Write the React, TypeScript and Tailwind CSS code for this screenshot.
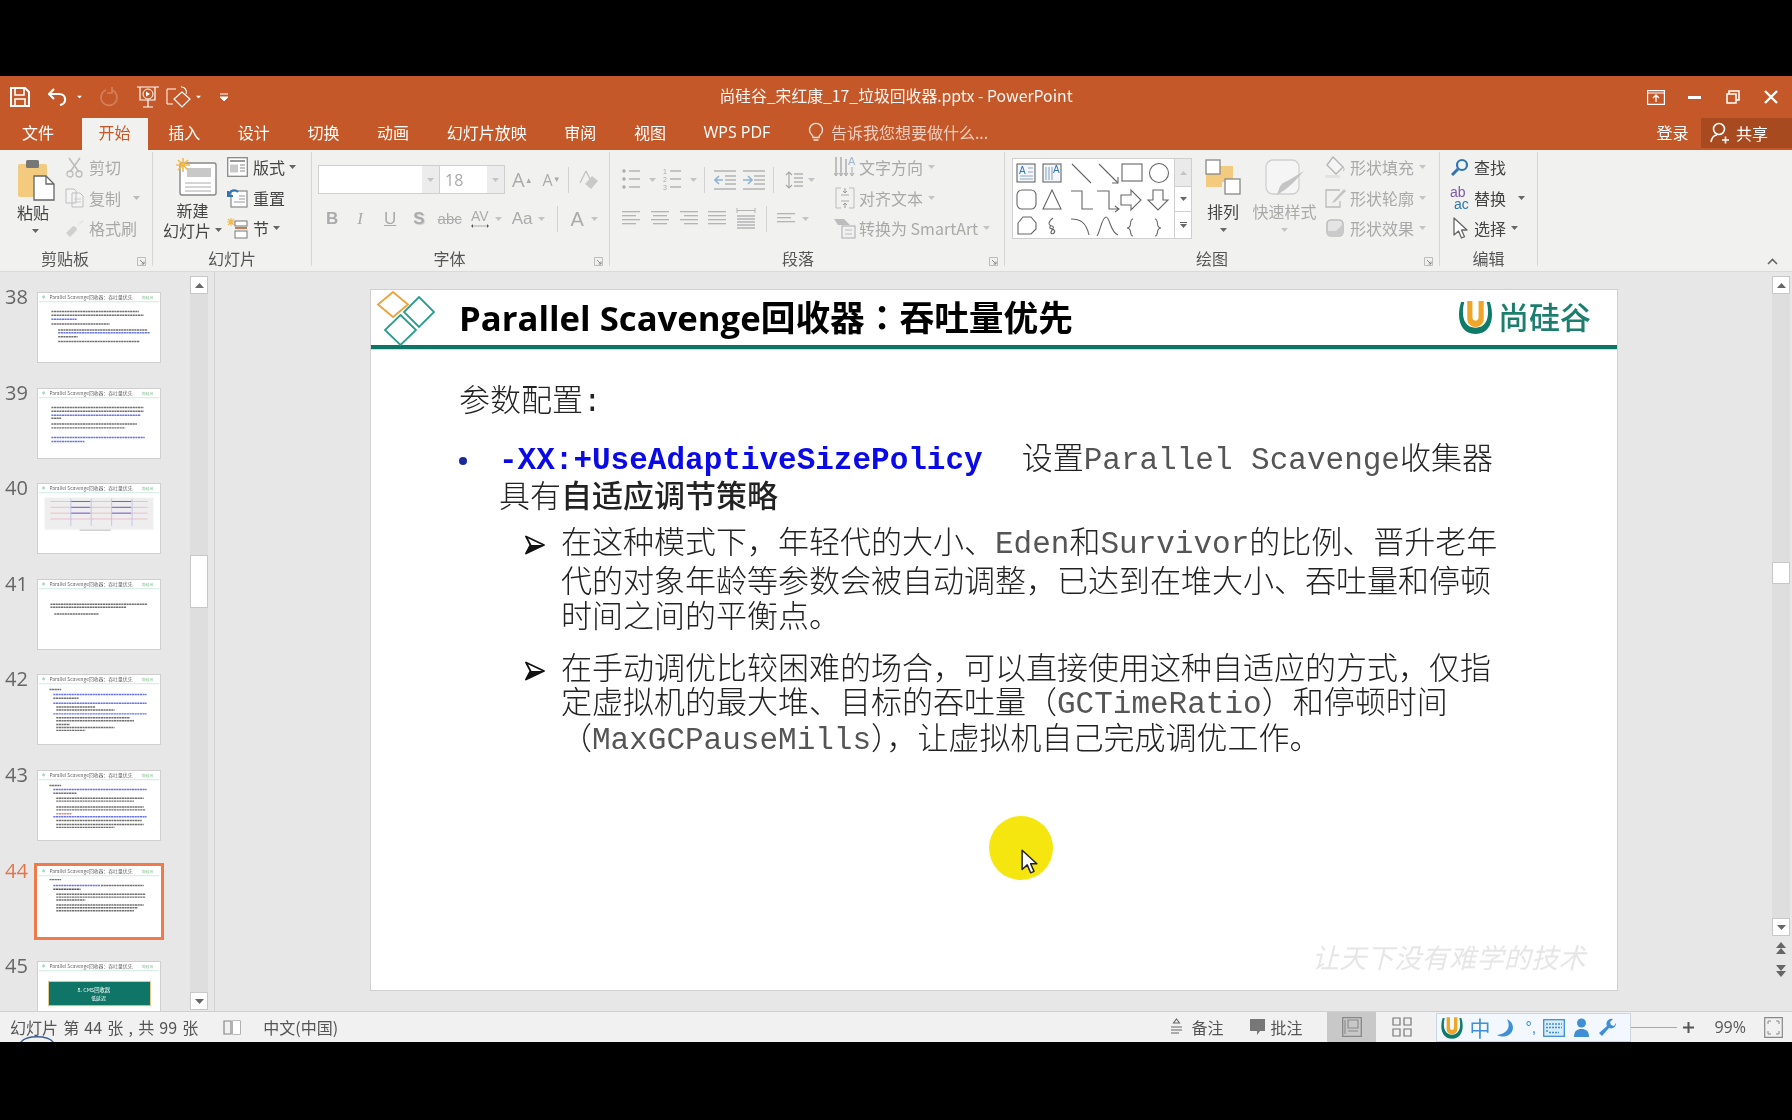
import React from "react";

const CJK = '"Noto Sans CJK SC", sans-serif';

type SP = { w: number; h: number; children: React.ReactNode; className?: string };
const S = ({ w, h, children, className }: SP) => (
  <svg width={w} height={h} viewBox={`0 0 ${w} ${h}`} fill="none" className={`shrink-0 ${className ?? ""}`}>
    {children}
  </svg>
);

const Caret = ({ c = "#777", className = "" }: { c?: string; className?: string }) => (
  <S w={7} h={4} className={className}><path d="M0 0h7L3.5 4z" fill={c} /></S>
);

const Launcher = () => (
  <div className="absolute right-[6px] bottom-0">
    <S w={9} h={9}>
      <path d="M.5 .5h8v8h-8z" stroke="#BDBDBD" />
      <path d="M3 3l4 4M7 4.5V7H4.5" stroke="#888" />
    </S>
  </div>
);

function Small({ icon, iw, text, dim, gap = 5 }: { icon: React.ReactNode; iw: number; text: string; dim?: boolean; gap?: number }) {
  return (
    <div className="flex h-[30.5px] items-center">
      <div className="flex justify-center shrink-0" style={{ width: iw, marginRight: gap }}>{icon}</div>
      <span className={`text-[16px] leading-none whitespace-nowrap ${dim ? "text-[#A9A9A9]" : "text-[#444]"}`}>{text}</span>
    </div>
  );
}

function Group({ w, label, launcher, lx = 0, children }: { w: number; label: string; launcher?: boolean; lx?: number; children: React.ReactNode }) {
  return (
    <div className="relative mt-[2px] h-[114px] border-r border-[#D6D6D6] shrink-0" style={{ width: w }}>
      <div className="h-[91.5px] flex">{children}</div>
      <div className="mt-[6px] text-center text-[16px] leading-[16px] text-[#555]" style={{ paddingRight: lx }}>{label}</div>
      {launcher && <Launcher />}
    </div>
  );
}

const Sep = ({ h = 26, x = 0 }: { h?: number; x?: number }) => (
  <div className="w-px bg-[#D2D2D2] shrink-0" style={{ height: h, marginLeft: x }} />
);

/* ---------- ribbon glyphs ---------- */
const PasteIcon = () => (
  <S w={38} h={42}>
    <rect x="1" y="5" width="29" height="33" rx="2" fill="#F2CB7F" />
    <rect x="9" y="1" width="13" height="8" rx="1.5" fill="#777" />
    <path d="M17 17h12l8 8v16H17z" fill="#fff" stroke="#666" strokeWidth="1.3" />
    <path d="M29 17v8h8" stroke="#666" strokeWidth="1.3" />
  </S>
);
const NewSlide = () => (
  <S w={42} h={38}>
    <rect x="5" y="5" width="36" height="32" rx="2" fill="#fff" stroke="#888" strokeWidth="1.4" />
    <rect x="12" y="10" width="24" height="9" fill="#C8C8C8" />
    <path d="M10 25h26M10 29h26M10 33h26" stroke="#AAA" />
    <path d="M8 0v14M1 7h14M3 2l10 10M13 2L3 12" stroke="#F3B94C" strokeWidth="1.6" />
  </S>
);
const Layout = () => (
  <S w={21} h={20}>
    <rect x=".7" y=".7" width="19.6" height="18.6" fill="#fff" stroke="#888" strokeWidth="1.3" />
    <path d="M3 4h15" stroke="#999" strokeWidth="2" />
    <path d="M3 7.5h8v8H3z" fill="#C9C9C9" />
    <path d="M13 8h5M13 11h5M13 14h5" stroke="#888" />
  </S>
);
const Reset = () => (
  <S w={21} h={20}>
    <rect x="4" y="3" width="16" height="16" fill="#fff" stroke="#888" strokeWidth="1.2" />
    <path d="M12 8h6M12 11h6M7 14h11" stroke="#999" />
    <path d="M2 7c1-5 6-6 9-3M1 3v5h5" stroke="#2E75B6" strokeWidth="2" />
  </S>
);
const Section = () => (
  <S w={22} h={22}>
    <path d="M4 1v8M0 5h8M1 2l6 6M7 2L1 8" stroke="#F3B94C" strokeWidth="1.2" />
    <rect x="8" y="4" width="12" height="5" fill="#fff" stroke="#777" />
    <path d="M8 11h12" stroke="#C55A28" strokeWidth="1.6" />
    <rect x="8" y="14" width="12" height="7" fill="#fff" stroke="#777" />
  </S>
);
const Lines = ({ w = 18, n = 4, kind = "l" }: { w?: number; n?: number; kind?: "l" | "c" | "r" | "j" }) => {
  const rows = Array.from({ length: n }, (_, i) => i);
  return (
    <S w={w} h={n * 4 + 1}>
      {rows.map((i) => {
        const short = i % 2 === 1 && kind !== "j" ? 4 : 0;
        const x = kind === "c" ? short / 2 : kind === "r" ? short : 0;
        return <rect key={i} x={x} y={i * 4} width={w - short} height="1.3" fill="#B4B4B4" />;
      })}
    </S>
  );
};
const Bullets = ({ nums }: { nums?: boolean }) => (
  <S w={18} h={21}>
    {[2, 10, 18].map((y, i) =>
      nums ? (
        <text key={y} x="0" y={y + 2.5} fontSize="7" fill="#AAA" fontFamily="Liberation Sans">{i + 1}</text>
      ) : (
        <circle key={y} cx="2" cy={y} r="1.7" fill="#ABABAB" />
      )
    )}
    <path d="M7 2h11M7 10h11M7 18h11" stroke="#B4B4B4" strokeWidth="1.3" />
  </S>
);
const Indent = ({ right }: { right?: boolean }) => (
  <S w={22} h={20}>
    <path d="M0 1h22M11 6h11M11 10h11M11 14h11M0 19h22" stroke="#B4B4B4" strokeWidth="1.3" />
    <path d={right ? "M0 10h8M5 6l4 4-4 4" : "M9 10H1M5 6l-4 4 4 4"} stroke="#8FB3D6" strokeWidth="1.6" />
  </S>
);
const LineSpace = () => (
  <S w={18} h={20}>
    <path d="M4 2v16M1 5l3-3 3 3M1 15l3 3 3-3" stroke="#A9A9A9" strokeWidth="1.2" />
    <path d="M9 4h9M9 8h9M9 12h9M9 16h9" stroke="#B4B4B4" strokeWidth="1.3" />
  </S>
);
const TextDir = () => (
  <S w={22} h={24}>
    <path d="M2 2v18M7 2v18M12 4v16" stroke="#A9A9A9" strokeWidth="1.4" />
    <path d="M0 18l2 3 2-3M5 18l2 3 2-3M10 18l2 3 2-3" stroke="#A9A9A9" />
    <text x="14" y="10" fontSize="11" fill="#9FB6CC" fontFamily="Liberation Sans">A</text>
    <path d="M18 12v8M16 18l2 3 2-3" stroke="#A9A9A9" />
  </S>
);
const AlignText = () => (
  <S w={20} h={22}>
    <path d="M6 1H1v20h5M14 1h5v20h-5" stroke="#BBB" />
    <path d="M6 8h8M6 14h8" stroke="#AAA" />
    <path d="M10 1v5M8 4l2 2 2-2M10 21v-5M8 18l2-2 2 2" stroke="#999" />
  </S>
);
const SmartArt = () => (
  <S w={22} h={22}>
    <path d="M0 2h10l6 6H4z" fill="#BDBDBD" />
    <rect x="8" y="9" width="13" height="12" fill="#F1F1F1" stroke="#AAA" />
    <path d="M11 13h7M11 17h7" stroke="#BBB" />
  </S>
);
const Shapes = () => (
  <S w={161} h={80}>
    <g stroke="#666" strokeWidth="1.1">
      <rect x="4" y="5" width="18" height="18" fill="#F3F6FA" />
      <path d="M15 9h5M15 13h5M7 17h13M7 20h13" stroke="#8FA7C2" />
      <rect x="30" y="5" width="18" height="18" fill="#F3F6FA" />
      <path d="M33 8v13M36 8v13M39 8v13" stroke="#8FA7C2" />
      <path d="M59 5l19 19M86 5l19 19" />
      <path d="M105 18v6h-6" />
      <rect x="109" y="5" width="20" height="17" />
      <circle cx="146" cy="14" r="9.5" />
      <rect x="4" y="31" width="19" height="19" rx="5" />
      <path d="M39 31l9 19H30z" />
      <path d="M58 32h11v18h11" />
      <path d="M84 32h12v18h10M102 47l4 3-4 3" />
      <path d="M108 36h10v-5l10 10-10 10v-5h-10z" />
      <path d="M140 31h10v10h5l-10 10-10-10h5z" />
      <path d="M5 64l5-6h8l5 6v6l-5 5H5z" />
      <path d="M40 59c-4 3-6 7-1 8 4 1-2 5-1 7 2 2 5-1 3-3-3-2-6-1-3-5" />
      <path d="M58 60c9 0 15 3 18 16" />
      <path d="M84 77c3-4 5-19 9-19s4 15 12 18" />
      <path d="M120 60c-3 0-2 5-3 7-1 2-3 2-3 2s2 0 3 2c1 2 0 6 3 6" />
      <path d="M142 60c3 0 2 5 3 7 1 2 3 2 3 2s-2 0-3 2c-1 2 0 6-3 6" />
    </g>
    <text x="6" y="15" fontSize="10" fill="#2E75B6" fontFamily="Liberation Sans">A</text>
    <text x="40" y="14" fontSize="10" fill="#2E75B6" fontFamily="Liberation Sans">A</text>
  </S>
);
const Arrange = () => (
  <S w={36} h={36}>
    <rect x="12" y="7" width="16" height="16" fill="#F2CB7F" />
    <rect x="1" y="12" width="16" height="16" fill="#F2CB7F" />
    <rect x="1" y="1" width="14" height="14" fill="#fff" stroke="#888" strokeWidth="1.3" />
    <rect x="20" y="20" width="15" height="15" fill="#fff" stroke="#888" strokeWidth="1.3" />
  </S>
);
const Quick = () => (
  <S w={40} h={38}>
    <rect x="1" y="1" width="33" height="34" rx="7" fill="#F5F5F5" stroke="#CFCFCF" strokeWidth="1.3" />
    <path d="M39 12L28 24l-7 6-9 6c2-6 3-10 6-12l6-3z" fill="#C4C4C4" />
  </S>
);
const Fill = () => (
  <S w={21} h={22}>
    <path d="M8 1l10 10-7 7L2 9z" fill="#F5F5F5" stroke="#B5B5B5" strokeWidth="1.4" />
    <path d="M17 10c2 2 3 4 1 5" stroke="#B5B5B5" />
    <rect x="0" y="19" width="15" height="3" fill="#E3E3E3" />
  </S>
);
const Outline = () => (
  <S w={21} h={22}>
    <path d="M15 3H1v17h14v-6" stroke="#BBB" strokeWidth="1.3" />
    <path d="M19 2L9 13l-2 3 3-1L21 4z" fill="#C4C4C4" />
  </S>
);
const Effect = () => (
  <S w={20} h={20}>
    <rect x="2" y="2" width="16" height="16" rx="4" fill="#E4E4E4" stroke="#BDBDBD" strokeWidth="1.6" />
    <path d="M2 13h9l7-7v8a4 4 0 0 1-4 4H6a4 4 0 0 1-4-4z" fill="#CACACA" />
  </S>
);
const Find = () => (
  <S w={18} h={18}>
    <circle cx="11" cy="7" r="5" stroke="#2E75B6" strokeWidth="2.2" />
    <path d="M7 11l-6 6" stroke="#2E75B6" strokeWidth="3" />
  </S>
);
const Replace = () => (
  <div className="relative w-[22px] h-[24px] font-['Liberation_Sans'] text-[14px] leading-[12px]">
    <div className="text-[#7C5AA6] pl-[1px]">ab</div>
    <div className="text-[#2E75B6] pl-[5px]">ac</div>
  </div>
);
const Cursor = ({ stroke = "#666", fill = "#fff", w = 15, h = 22 }: { stroke?: string; fill?: string; w?: number; h?: number }) => (
  <svg width={w} height={h} viewBox="0 0 15 22" className="shrink-0">
    <path d="M1 1v17l4.5-4 3 7 3-1.3-3-6.7H14z" fill={fill} stroke={stroke} strokeWidth="1.3" strokeLinejoin="round" />
  </svg>
);

/* ---------- thumbnails ---------- */
type Ln = [number, number, number, string?];
const BL = "#2D3FD8";
const RD = "#E0543E";
const THUMBS: { n: number; lines: Ln[]; diagram?: boolean; cover?: boolean }[] = [
  { n: 38, lines: [[19, 13, 90], [23, 13, 95], [27, 13, 26, BL], [32, 13, 60], [38, 20, 92], [41, 20, 94, BL], [45, 20, 20], [50, 20, 84]] },
  { n: 39, lines: [[19, 13, 95], [23, 13, 95], [27, 13, 92, BL], [30, 13, 10], [36, 13, 88], [40, 13, 76], [50, 13, 96, BL], [54, 13, 34, BL]] },
  { n: 40, diagram: true, lines: [] },
  { n: 41, lines: [[25, 12, 100], [28, 12, 78], [35, 16, 46]] },
  { n: 42, lines: [[15, 11, 12], [20, 15, 96, BL], [24, 15, 26], [29, 15, 96, BL], [33, 18, 40], [36, 18, 60], [40, 15, 96, BL], [44, 18, 76], [47, 18, 80], [51, 18, 14], [54, 18, 60], [57, 18, 30]] },
  { n: 43, lines: [[15, 11, 12], [19, 15, 96, BL], [23, 15, 24], [28, 18, 90], [31, 18, 80], [37, 18, 90], [40, 18, 92], [44, 18, 16, RD], [47, 15, 96, BL], [51, 18, 88], [55, 18, 90], [58, 18, 60]] },
  { n: 44, lines: [[13, 11, 12], [19, 15, 48, BL], [19, 64, 44], [23, 15, 28, "#111"], [28, 18, 92], [31, 18, 92], [34, 18, 30], [39, 18, 90], [42, 18, 84], [45, 18, 80]] },
  { n: 45, cover: true, lines: [] },
];

function Thumb({ t, selected }: { t: (typeof THUMBS)[number]; selected: boolean }) {
  return (
    <div className="flex h-[95.6px] shrink-0">
      <div className={`w-[37px] pl-[5px] -mt-[2px] text-[20px] leading-[13px] font-['Open_Sans'] ${selected ? "text-[#E0744A]" : "text-[#666]"}`}>{t.n}</div>
      <div className={`w-[124px] h-[71px] bg-white border ${selected ? "border-white outline-3 outline-[#EE7B4C]" : "border-[#CFCFCF]"}`}>
        <svg width="122" height="69" viewBox="0 0 124 71" className="blur-[0.5px]">
          <path d="M3 4l2-2 2 2-2 2z" fill="#A8D8CC" />
          <text x="11" y="6" fontSize="5" fill="#666" fontFamily={CJK}>Parallel Scavenge回收器：吞吐量优先</text>
          <text x="106" y="6" fontSize="4" fill="#7DBB8E" fontFamily={CJK}>尚硅谷</text>
          <rect x="0" y="8.500" width="124" height="1" fill="#CFE8E2" />
          {t.lines.map(([y, x, w, c], i) => (
            <path key={i} d={`M${x} ${y}h${w}`} stroke={c ?? "#3A3A3A"} strokeWidth="1.5" strokeDasharray="2.2 .5" opacity=".72" />
          ))}
          {t.diagram && (
            <g>
              <rect x="6" y="14" width="112" height="33" fill="#EEEEEE" />
              {[18, 24, 30, 36].map((y) => <path key={y} d={`M12 ${y}h100`} stroke="#ECA9B8" strokeWidth=".7" />)}
              {[18, 24, 30].map((y) => <path key={y} d={`M33 ${y}h20M75 ${y}h20`} stroke="#6A5FD0" strokeWidth="1" />)}
              <path d="M33 15v28M54 15v28M75 15v28M96 15v28" stroke="#C0C3EC" strokeWidth="1" />
              <rect x="42" y="47" width="32" height="1" fill="#BBB" />
            </g>
          )}
          {t.cover && (
            <g>
              <rect x="10" y="20" width="105" height="25" fill="#0F7566" stroke="#E8C88A" />
              <text x="40" y="31" fontSize="5.5" fill="#fff" fontFamily={CJK}>8. CMS回收器</text>
              <text x="54" y="39" fontSize="5" fill="#fff" fontFamily={CJK}>低延迟</text>
            </g>
          )}
        </svg>
      </div>
    </div>
  );
}

const ScrollBtn = ({ up }: { up?: boolean }) => (
  <div className="h-[18px] w-[18px] bg-white border border-[#C8C8C8] flex items-center justify-center shrink-0">
    <svg width="9" height="5" viewBox="0 0 9 5"><path d={up ? "M4.5 0L9 5H0z" : "M0 0h9L4.5 5z"} fill="#666" /></svg>
  </div>
);

const Line = ({ mt, children, className = "" }: { mt: number; children: React.ReactNode; className?: string }) => (
  <div className={`h-[36px] leading-[36px] whitespace-nowrap ${className}`} style={{ marginTop: mt }}>{children}</div>
);

const La = ({ children }: { children: React.ReactNode }) => <span className="text-[#555]">{children}</span>;

const SubArrow = () => (
  <div className="w-[102px] pl-[66px] shrink-0 flex items-center h-[36px]">
    <svg width="20" height="20" viewBox="0 0 20 20">
      <path d="M1 1.500L19 10 1 18.500 5.500 10z" fill="#fff" stroke="#111" strokeWidth="1.800" strokeLinejoin="round" />
      <path d="M5.500 10L19 10 1 18.500z" fill="#111" />
    </svg>
  </div>
);

const UMark = ({ size = 36 }: { size?: number }) => (
  <svg width={size} height={size} viewBox="0 0 36 36" className="shrink-0">
    <path d="M4 3C-1 18 3 34 18 34S37 18 32 3l-3 0c3 12 1 25-11 25S4 15 7 3z" fill="#0E7A68" />
    <path d="M10 2h5v16c0 4 6 4 6 0V2h5v17c0 11-16 11-16 0z" fill="#EFA526" />
  </svg>
);

const Tab = ({ children, className = "" }: { children: React.ReactNode; className?: string }) => (
  <span className={`pt-[6px] ${className}`}>{children}</span>
);

export default function App() {
  return (
    <div className="w-[1792px] h-[1120px] bg-black flex flex-col overflow-hidden text-[#444] blur-[0.3px] font-['Noto_Sans_CJK_SC',sans-serif]">
      <div className="h-[76px] shrink-0" />

      {/* title bar */}
      <div className="h-[42px] shrink-0 bg-[#C55829] grid grid-cols-[1fr_auto_1fr] items-center text-white">
        <div className="flex items-center pl-[10px]">
          <S w={20} h={20}>
            <path d="M1 1h14l4 4v14H1z" stroke="#fff" strokeWidth="2" />
            <path d="M5 2v6h9V2M5 18v-6h10v6" stroke="#fff" strokeWidth="1.6" />
          </S>
          <S w={19} h={18} className="ml-[18px]">
            <path d="M6 1L1 6l5 5M1 6h10c8 0 8 10 1 11" stroke="#fff" strokeWidth="2.2" />
          </S>
          <Caret c="#fff" className="ml-[9px] scale-75" />
          <S w={20} h={20} className="ml-[16px] opacity-30">
            <path d="M7 3a8 8 0 1 0 6 0M13 0v6h-5" stroke="#F4D9CB" strokeWidth="1.6" />
          </S>
          <S w={22} h={24} className="ml-[18px]">
            <path d="M0 2h22M3 2v13h15V2M11 15v7M6 22h10" stroke="#fff" strokeWidth="1.2" />
            <circle cx="11" cy="9" r="5" stroke="#fff" />
            <path d="M9 6.5v5l4-2.5z" fill="#fff" />
          </S>
          <S w={26} h={22} className="ml-[7px]">
            <path d="M10 3H1v15h6" stroke="#fff" />
            <path d="M15 1a5 5 0 0 1 5 7M16 6l-8 7 8 8 8-8z" stroke="#fff" strokeWidth="1.2" />
          </S>
          <Caret c="#fff" className="ml-[3px] scale-75" />
          <S w={8} h={9} className="ml-[18px]">
            <path d="M0 1h8M0 4h8L4 8z" stroke="#fff" fill="#fff" strokeWidth="1" />
          </S>
        </div>
        <div className="text-[15.8px] leading-none whitespace-nowrap text-white/95 -mt-[2px]">尚硅谷_宋红康_17_垃圾回收器.pptx - PowerPoint</div>
        <div className="flex items-center justify-end pr-[14px]">
          <S w={18} h={15}>
            <path d="M.6.6h16.8v13.8H.6zM.6 3h16.8" stroke="#fff" strokeWidth="1.2" />
            <path d="M9 12V6M6 8l3-3 3 3" stroke="#fff" strokeWidth="1.3" />
          </S>
          <div className="ml-[23px] w-[13px] h-[3px] bg-white" />
          <S w={14} h={14} className="ml-[25px]">
            <path d="M3 4V1h10v9h-3M1 4h9v9H1z" stroke="#fff" strokeWidth="1.5" />
          </S>
          <S w={14} h={14} className="ml-[24px]">
            <path d="M1 1l12 12M13 1L1 13" stroke="#fff" strokeWidth="2.4" />
          </S>
        </div>
      </div>

      {/* tabs */}
      <div className="h-[32px] shrink-0 bg-[#C55829] flex items-start text-white text-[16px] leading-[16px] pl-[22px] gap-[37.6px] whitespace-nowrap">
        <Tab className="mr-[7px]">文件</Tab>
        <Tab className="bg-[#F1F2F0] text-[#C55829] -mx-[17px] px-[17px] h-[32px]">开始</Tab>
        <Tab>插入</Tab>
        <Tab>设计</Tab>
        <Tab>切换</Tab>
        <Tab>动画</Tab>
        <Tab>幻灯片放映</Tab>
        <Tab>审阅</Tab>
        <Tab>视图</Tab>
        <Tab className="font-['Open_Sans'] text-[16px]">WPS PDF</Tab>
        <span className="flex items-center h-[28px] text-white/70">
          <S w={16} h={20} className="mr-[7px]">
            <path d="M4 13a6.5 6.5 0 1 1 8 0c-.7.6-1 1.5-1 2.5H5c0-1-.3-1.900-1-2.500zM5.500 18h5" stroke="#F6E3D9" strokeWidth="1.3" />
          </S>
          告诉我您想要做什么...
        </span>
        <div className="flex-1" />
        <Tab className="-mr-[25px]">登录</Tab>
        <span className="w-[91px] h-[30px] bg-[#A84A20] flex items-center pl-[9px]">
          <S w={19} h={22} className="mr-[7px]">
            <circle cx="9" cy="7" r="5.500" stroke="#fff" strokeWidth="1.6" />
            <path d="M1 20c1-5 3-7 6-7M12 18h7M15.500 14.500v7" stroke="#fff" strokeWidth="1.600" />
          </S>
          共享
        </span>
      </div>

      {/* ribbon */}
      <div className="relative h-[122px] shrink-0 bg-[#F1F2F0] border-b border-[#DADADA] flex items-start">
        <Group w={153} label="剪贴板" launcher lx={22}>
          <div className="w-[65px] pl-[17px] flex flex-col pt-[7px]">
            <PasteIcon />
            <div className="text-[16px] leading-[18px] text-[#444] mt-[2px]">粘贴</div>
            <Caret c="#666" className="ml-[15px] mt-[8px]" />
          </div>
          <div className="flex flex-col">
            <Small iw={19} text="剪切" dim icon={
              <S w={17} h={21}>
                <path d="M3 1l10 14M14 1L4 15" stroke="#BDBDBD" strokeWidth="1.6" />
                <circle cx="4" cy="17" r="3" stroke="#BDBDBD" strokeWidth="1.300" />
                <circle cx="13" cy="17" r="3" stroke="#BDBDBD" strokeWidth="1.300" />
              </S>
            } />
            <div className="flex items-center">
              <Small iw={19} text="复制" dim icon={
                <S w={19} h={20}>
                  <path d="M1 1h8l2 2v12H1zM7 5h8l3 3v11H7z" fill="#F4F4F4" stroke="#BDBDBD" />
                  <path d="M9 11h7M9 14h7" stroke="#CCC" />
                </S>
              } />
              <Caret c="#BBB" className="ml-[12px]" />
            </div>
            <Small iw={19} text="格式刷" dim icon={
              <S w={20} h={18}>
                <path d="M18 1l-7 7-3-1-7 7 4 4 7-7-1-3 7-6z" fill="#D0D0D0" />
              </S>
            } />
          </div>
        </Group>

        <Group w={159} label="幻灯片">
          <div className="w-[76px] pl-[9px] pt-[6px] flex flex-col items-center">
            <NewSlide />
            <div className="text-[16px] leading-[20px] mt-[4px] -ml-[6px]">新建</div>
            <div className="flex items-center whitespace-nowrap text-[16px] leading-[20px] -ml-[6px]">幻灯片<Caret c="#666" className="ml-[4px]" /></div>
          </div>
          <div className="flex flex-col -ml-[2px]">
            <div className="flex items-center"><Small iw={21} text="版式" icon={<Layout />} /><Caret c="#666" className="ml-[4px]" /></div>
            <div className="flex items-center"><Small iw={21} text="重置" icon={<Reset />} /></div>
            <div className="flex items-center"><Small iw={21} text="节" icon={<Section />} /><Caret c="#666" className="ml-[4px]" /></div>
          </div>
        </Group>

        <Group w={298} label="字体" launcher lx={22}>
          <div className="flex flex-col pl-[6px]">
            <div className="mt-[13px] h-[29px] flex items-center">
              <div className="w-[122px] h-[29px] bg-white border border-[#CFCFCF] flex justify-end">
                <div className="w-[17px] bg-[#ECECEC] flex items-center justify-center"><Caret c="#C4C4C4" /></div>
              </div>
              <div className="w-[65px] h-[29px] bg-white border border-l-0 border-[#CFCFCF] flex items-center justify-between pl-[5px]">
                <span className="font-['Open_Sans'] text-[16px] text-[#A9A9A9]">18</span>
                <div className="w-[17px] h-full bg-[#ECECEC] flex items-center justify-center"><Caret c="#C4C4C4" /></div>
              </div>
              <span className="ml-[7px] font-['Open_Sans'] text-[20px] leading-none text-[#ABABAB]">A<sup className="text-[8px]">▲</sup></span>
              <span className="ml-[10px] font-['Open_Sans'] text-[16px] leading-none text-[#ABABAB]">A<sup className="text-[8px]">▼</sup></span>
              <Sep x={7} />
              <S w={20} h={20} className="ml-[9px]">
                <path d="M8 1L2 13M8 1l4 8" stroke="#C6C6C6" strokeWidth="1.5" />
                <path d="M14 6l6 5-7 8-6-5z" fill="#C9C9C9" />
              </S>
            </div>
            <div className="mt-[10px] h-[30px] flex items-center font-['Liberation_Sans'] text-[#ABABAB]">
              <span className="ml-[8px] text-[17px] font-bold">B</span>
              <span className="ml-[19px] text-[17px] italic font-['Liberation_Serif']">I</span>
              <span className="ml-[21px] text-[17px] underline">U</span>
              <span className="ml-[17px] text-[17px] font-bold [text-shadow:1px_1px_1px_#ccc]">S</span>
              <span className="ml-[13px] text-[15px] line-through">abc</span>
              <span className="ml-[8px] text-[14px] leading-[13px] flex flex-col items-center">AV<svg width="20" height="6" viewBox="0 0 20 6"><path d="M1 3h18M3 1L1 3l2 2M17 1l2 2-2 2" stroke="#ABABAB" /></svg></span>
              <Caret c="#C4C4C4" className="ml-[5px]" />
              <span className="ml-[10px] text-[17px]">Aa</span>
              <Caret c="#C4C4C4" className="ml-[5px]" />
              <Sep x={12} />
              <span className="ml-[13px] text-[20px]">A</span>
              <Caret c="#C4C4C4" className="ml-[7px]" />
            </div>
          </div>
        </Group>

        <Group w={395} label="段落" launcher lx={18}>
          <div className="w-[224px] pl-[12px] flex flex-col shrink-0">
            <div className="mt-[13px] h-[29px] flex items-center">
              <Bullets /><Caret c="#C4C4C4" className="ml-[9px]" />
              <div className="ml-[7px]"><Bullets nums /></div><Caret c="#C4C4C4" className="ml-[9px]" />
              <Sep x={7} />
              <div className="ml-[9px]"><Indent /></div>
              <div className="ml-[7px]"><Indent right /></div>
              <Sep x={8} />
              <div className="ml-[11px]"><LineSpace /></div><Caret c="#C4C4C4" className="ml-[5px]" />
            </div>
            <div className="mt-[10px] h-[30px] flex items-center">
              <Lines /><div className="ml-[11px]"><Lines kind="c" /></div>
              <div className="ml-[11px]"><Lines kind="r" /></div>
              <div className="ml-[10px]"><Lines kind="j" /></div>
              <S w={20} h={24} className="ml-[10px]">
                <path d="M1 1v5M19 1v5M1 3.500h18" stroke="#B4B4B4" />
                <path d="M1 9h18M1 12h18M1 15h18M1 18h18M1 21h18" stroke="#B4B4B4" strokeWidth="1.300" />
              </S>
              <Sep x={10} />
              <div className="ml-[10px]"><Lines n={3} /></div><Caret c="#C4C4C4" className="ml-[7px]" />
            </div>
          </div>
          <div className="flex flex-col">
            <div className="flex items-center"><Small iw={22} text="文字方向" dim gap={3} icon={<TextDir />} /><Caret c="#C4C4C4" className="ml-[5px]" /></div>
            <div className="flex items-center"><Small iw={22} text="对齐文本" dim gap={3} icon={<AlignText />} /><Caret c="#C4C4C4" className="ml-[5px]" /></div>
            <div className="flex items-center"><Small iw={22} text="转换为 SmartArt" dim gap={3} icon={<SmartArt />} /><Caret c="#C4C4C4" className="ml-[5px]" /></div>
          </div>
        </Group>

        <Group w={435} label="绘图" launcher lx={20}>
          <div className="ml-[7px] mt-[6px] w-[180px] h-[81px] bg-white border border-[#CFCFCF] flex shrink-0">
            <Shapes />
            <div className="flex-1 border-l border-[#CFCFCF] flex flex-col">
              <div className="h-[27px] bg-[#EAEAEA] flex items-center justify-center">
                <svg width="7" height="4" viewBox="0 0 7 4"><path d="M3.500 0L7 4H0z" fill="#C4C4C4" /></svg>
              </div>
              <div className="h-[26px] border-y border-[#CFCFCF] flex items-center justify-center"><Caret c="#666" /></div>
              <div className="flex-1 flex flex-col items-center justify-center gap-[1px]">
                <div className="w-[7px] h-px bg-[#666]" /><Caret c="#666" />
              </div>
            </div>
          </div>
          <div className="w-[62px] flex flex-col items-center pt-[7px]">
            <Arrange />
            <div className="mt-[7px] text-[16px] leading-[18px]">排列</div>
            <Caret c="#666" className="mt-[8px]" />
          </div>
          <div className="w-[63px] -ml-[1px] flex flex-col items-center pt-[7px] shrink-0">
            <Quick />
            <div className="mt-[5px] text-[16px] leading-[18px] whitespace-nowrap text-[#A9A9A9]">快速样式</div>
            <Caret c="#C4C4C4" className="mt-[8px]" />
          </div>
          <div className="flex flex-col ml-[9px]">
            <div className="flex items-center"><Small iw={20} text="形状填充" dim gap={5} icon={<Fill />} /><Caret c="#C4C4C4" className="ml-[5px]" /></div>
            <div className="flex items-center"><Small iw={20} text="形状轮廓" dim gap={5} icon={<Outline />} /><Caret c="#C4C4C4" className="ml-[5px]" /></div>
            <div className="flex items-center"><Small iw={20} text="形状效果" dim gap={5} icon={<Effect />} /><Caret c="#C4C4C4" className="ml-[5px]" /></div>
          </div>
        </Group>

        <Group w={98} label="编辑">
          <div className="flex flex-col pl-[9px]">
            <Small iw={22} text="查找" gap={3} icon={<Find />} />
            <div className="flex items-center"><Small iw={22} text="替换" gap={3} icon={<Replace />} /><Caret c="#666" className="ml-[12px]" /></div>
            <div className="flex items-center"><Small iw={22} text="选择" gap={3} icon={<Cursor />} /><Caret c="#666" className="ml-[5px]" /></div>
          </div>
        </Group>

        <div className="absolute right-[14px] bottom-[6px]">
          <svg width="11" height="7" viewBox="0 0 11 7"><path d="M1 6l4.500-4.500L10 6" stroke="#666" strokeWidth="1.600" fill="none" /></svg>
        </div>
      </div>

      {/* main */}
      <div className="h-[739px] shrink-0 bg-[#E6E7E6] flex overflow-hidden">
        <div className="w-[215px] shrink-0 border-r border-[#D2D2D2] flex">
          <div className="w-[190px] shrink-0 flex flex-col pt-[20px] overflow-hidden">
            {THUMBS.map((t) => <Thumb key={t.n} t={t} selected={t.n === 44} />)}
          </div>
          <div className="w-[18px] mt-[4px] mb-[1px] bg-[#DDDEDD] flex flex-col shrink-0">
            <ScrollBtn up />
            <div className="flex-1 flow-root">
              <div className="mt-[261px] h-[53px] w-[18px] bg-white border border-[#C8C8C8]" />
            </div>
            <ScrollBtn />
          </div>
        </div>

        <div className="flex-1 flex">
          <div className="flex-1 pl-[155px] pt-[17px]">
            {/* slide */}
            <div className="relative w-[1248px] h-[702px] bg-white border border-[#D0D0D0]">
              <div className="h-[59px] border-b-[4px] border-[#0E7466] flex items-center shadow-[0_1px_0_#BFE3DC]">
                <svg width="64" height="58" viewBox="0 0 64 58" fill="none" className="shrink-0 mt-[2px] ml-[1px]">
                  <path d="M21 2l15 12.500L21 27 6 14.500z" stroke="#EEA23A" strokeWidth="1.800" />
                  <path d="M47 7l15 15-15 15-15-15z" stroke="#2A9D8F" strokeWidth="1.800" />
                  <path d="M28.500 25L44 40 28.500 55 13 40z" stroke="#2A9D8F" strokeWidth="1.800" />
                </svg>
                <div className="ml-[23px] text-[34.7px] font-bold text-black whitespace-nowrap leading-none font-['Open_Sans','Noto_Sans_CJK_SC',sans-serif]">
                  Parallel Scavenge回收器<span className="font-['Noto_Sans_CJK_TC']">：</span>吞吐量优先
                </div>
                <div className="ml-auto mr-[26px] flex items-center">
                  <UMark size={37} />
                  <span className="ml-[4px] -mt-[4px] text-[#1C7F6E] text-[31px] leading-none font-medium">尚硅谷</span>
                </div>
              </div>

              <div className="pl-[88px] pt-[36px] text-[31px] text-[#222] font-light font-['Liberation_Mono','Noto_Sans_CJK_SC',monospace]">
                <Line mt={0}>参数配置:</Line>
                <div className="flex" style={{ marginTop: 22 }}>
                  <div className="w-[40px] h-[36px] flex items-center shrink-0"><div className="w-[8px] h-[8px] rounded-full bg-[#1B2A9A]" /></div>
                  <div>
                    <div className="h-[36px] leading-[36px] whitespace-nowrap">
                      <span className="font-bold text-[#0A0AE6]">-XX:+UseAdaptiveSizePolicy</span>
                      <span className="ml-[39px]">设置<La>Parallel Scavenge</La>收集器</span>
                    </div>
                    <Line mt={2}>具有<span className="font-medium">自适应调节策略</span></Line>
                  </div>
                </div>
                <div className="flex" style={{ marginTop: 10 }}>
                  <SubArrow />
                  <div className="flex flex-col">
                    <Line mt={0}>在这种模式下，年轻代的大小、<La>Eden</La>和<La>Survivor</La>的比例、晋升老年</Line>
                    <Line mt={3}>代的对象年龄等参数会被自动调整，已达到在堆大小、吞吐量和停顿</Line>
                    <Line mt={-1}>时间之间的平衡点。</Line>
                  </div>
                </div>
                <div className="flex" style={{ marginTop: 16 }}>
                  <SubArrow />
                  <div className="flex flex-col">
                    <Line mt={0}>在手动调优比较困难的场合，可以直接使用这种自适应的方式，仅指</Line>
                    <Line mt={-2}>定虚拟机的最大堆、目标的吞吐量（<La>GCTimeRatio</La>）和停顿时间</Line>
                    <Line mt={0}>（<La>MaxGCPauseMills</La>），让虚拟机自己完成调优工作。</Line>
                  </div>
                </div>
              </div>

              <div className="absolute right-[31px] bottom-[20px] text-[27px] leading-none italic text-[#E6E6E6] whitespace-nowrap tracking-[0.4px]">让天下没有难学的技术</div>

              <div className="absolute left-[618px] top-[526px] w-[64px] h-[64px] rounded-full bg-[#F5E60F]" />
              <div className="absolute left-[650px] top-[559px]"><Cursor stroke="#222" w={17} h={25} /></div>
            </div>
          </div>
          <div className="w-[20px] shrink-0 flex flex-col pt-[4px]">
            <ScrollBtn up />
            <div className="h-[624px] w-[18px] bg-[#DDDEDD] flow-root">
              <div className="mt-[268px] h-[22px] bg-white border border-[#C8C8C8]" />
            </div>
            <ScrollBtn />
            <div className="w-[18px] flex flex-col items-center">
              <svg width="10" height="14" viewBox="0 0 10 14" className="mt-[6px]"><path d="M5 0l5 6H0zM5 6l5 6H0z" fill="#666" /></svg>
              <svg width="10" height="14" viewBox="0 0 10 14" className="mt-[8px]"><path d="M0 1h10L5 7zM0 7h10l-5 6z" fill="#666" /></svg>
            </div>
          </div>
        </div>
      </div>

      {/* status bar */}
      <div className="relative h-[31px] shrink-0 bg-[#F1F1F1] border-t border-[#CFCFCF] flex items-center text-[16px] leading-none text-[#555] whitespace-nowrap">
        <span className="ml-[10px] [word-spacing:1.600px]">幻灯片 第 44 张 , 共 99 张</span>
        <S w={18} h={15} className="ml-[25px]">
          <path d="M1 1h7v13H1zM10 1h7v13h-7z" stroke="#888" strokeWidth="1.200" />
          <path d="M10 1h7v13h-7z" fill="#fff" />
        </S>
        <span className="ml-[22px]">中文(中国)</span>
        <div className="flex-1" />
        <S w={13} h={18}>
          <path d="M6.500 1l3 4h-6zM1 9h11M1 12h11M1 15h8" stroke="#666" strokeWidth="1.100" />
        </S>
        <span className="ml-[8px]">备注</span>
        <S w={17} h={18} className="ml-[26px]">
          <path d="M1 1h15v12h-5l-3 4v-4H1z" fill="#777" />
        </S>
        <span className="ml-[4px]">批注</span>
        <div className="ml-[25px] w-[49px] h-[30px] bg-[#C8C8C8] flex items-center justify-center">
          <S w={20} h={20}>
            <path d="M.7.7h18.600v18.600H.7z" stroke="#888" strokeWidth="1.300" />
            <path d="M6 3h10v8H6zM3 3v14M6 14h10" stroke="#888" strokeWidth="1.100" />
          </S>
        </div>
        <S w={20} h={20} className="ml-[16px]">
          <path d="M1 1h7v7H1zM12 1h7v7h-7zM1 12h7v7H1zM12 12h7v7h-7z" stroke="#777" strokeWidth="1.200" />
        </S>
        <div className="ml-[24px] w-[195px] h-[29px] bg-[#F2F8FD] border border-[#CCD6DE] flex items-center pl-[3px] -mb-[1px]">
          <UMark size={24} />
          <span className="ml-[5px] text-[21px] leading-none text-[#3E8FD6]">中</span>
          <svg width="18" height="20" viewBox="0 0 18 20" className="ml-[6px]"><path d="M11 1c4 7 1 15-10 16 5 3 15 2 16-7 0-4-2-7-6-9z" fill="#3E8FD6" /></svg>
          <span className="ml-[11px] text-[16px] leading-none text-[#3E8FD6] font-['Liberation_Sans']">°,</span>
          <svg width="22" height="18" viewBox="0 0 22 18" className="ml-[7px]"><rect x=".7" y=".7" width="20.600" height="16.600" fill="#D9ECFA" stroke="#3E8FD6" strokeWidth="1.300" /><path d="M3 5h16M3 8.500h16M3 12h3M6 13.500h10" stroke="#3E8FD6" strokeWidth="1.600" strokeDasharray="2 1" /></svg>
          <svg width="15" height="20" viewBox="0 0 15 20" className="ml-[9px]"><circle cx="7.500" cy="5" r="4.500" fill="#3E8FD6" /><path d="M0 19c0-6 3-8 7.500-8s7.500 2 7.500 8z" fill="#3E8FD6" /></svg>
          <svg width="19" height="20" viewBox="0 0 19 20" className="ml-[9px]"><path d="M18 5a5 5 0 0 1-7 5l-7 8-3-3 8-7a5 5 0 0 1 6-7l-3 3 1 3 3 1z" fill="#3E8FD6" /></svg>
        </div>
        <div className="w-[46px] h-px bg-[#A9A9A9]" />
        <S w={13} h={13} className="ml-[5px]"><path d="M6.500 1v11M1 6.500h11" stroke="#555" strokeWidth="2" /></S>
        <span className="ml-[19px] font-['Open_Sans'] text-[16px]">99%</span>
        <S w={19} h={21} className="ml-[18px] mr-[9px]">
          <path d="M.7.7h17.600v19.600H.7z" stroke="#888" strokeWidth="1.200" />
          <path d="M4 7V4h3M15 7V4h-3M4 14v3h3M15 14v3h-3" stroke="#888" />
        </S>
        <svg width="34" height="7" viewBox="0 0 34 7" className="absolute left-[20px] bottom-0"><path d="M1 7C6 0 28 0 33 7" stroke="#3D5E96" strokeWidth="1.500" fill="none" /></svg>
      </div>

      <div className="flex-1" />
    </div>
  );
}
